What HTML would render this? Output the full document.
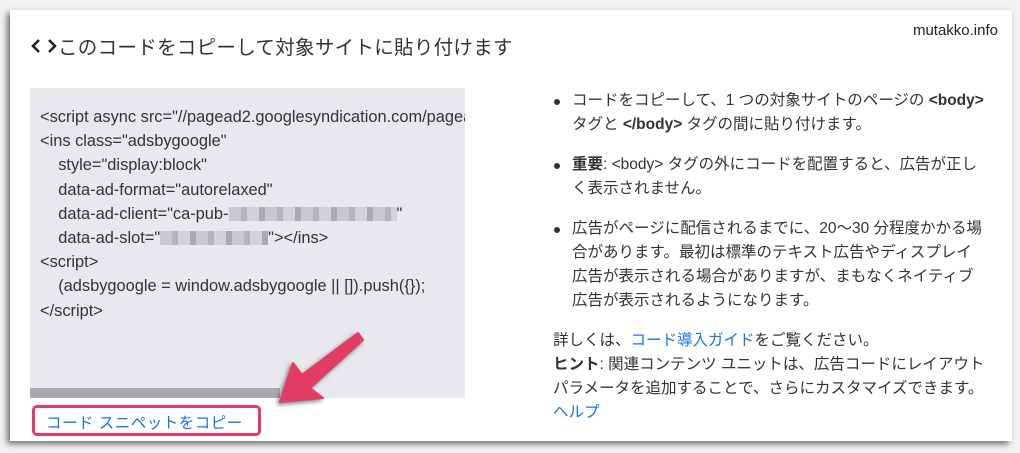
<!DOCTYPE html>
<html><head><meta charset="utf-8"><style>
*{margin:0;padding:0;box-sizing:border-box}
body{width:1020px;height:453px;background:#f3f3f3;font-family:"Liberation Sans","Noto Sans CJK JP",sans-serif;color:#333;position:relative;overflow:hidden}
.card{position:absolute;left:10px;top:10px;width:1002px;height:431px;background:#fff;box-shadow:-3px 3px 6px rgba(0,0,0,.55)}
.title{position:absolute;left:58px;top:31px;font-size:19.5px;color:#333;letter-spacing:.3px}
.site{position:absolute;right:22px;top:22px;font-size:15px;color:#222}
.code{position:absolute;left:30px;top:88px;width:435px;height:310px;background:#e8e9ec;overflow:hidden;font-size:16.4px;color:#333;line-height:24.2px;padding:17px 0 0 10px;white-space:pre}
.bar{position:absolute;left:30px;top:388px;width:250px;height:10px;background:#a9aaad}
.blur{display:inline-block;height:14px;vertical-align:-2px;background:repeating-linear-gradient(90deg,#c8c9cc 0 12px,#b4b5b8 12px 18px,#d2d3d6 18px 30px,#a9aaad 30px 36px)}
.btn{position:absolute;left:32px;top:405px;width:229px;height:31px;border:3px solid #e23c64;border-radius:5px;color:#1a73e8;font-size:15.5px;padding:3px 0 0 11px;letter-spacing:.5px;white-space:nowrap}
.right{position:absolute;left:553px;top:89px;width:460px;font-size:15.5px;line-height:24px;color:#333;white-space:nowrap}
.right li{list-style:none;position:relative;padding-left:19px;margin-bottom:16px}
.right li:before{content:"";position:absolute;left:1px;top:10px;width:6px;height:6px;border-radius:50%;background:#333}
a{color:#1a73e8;text-decoration:none}
</style></head><body>
<div class="card"></div>
<svg style="position:absolute;left:31px;top:38px" width="26" height="16"><path d="M8 2 L2 8 L8 14 M18 2 L24 8 L18 14" fill="none" stroke="#222" stroke-width="2.6"/></svg>
<div class="title">このコードをコピーして対象サイトに貼り付けます</div>
<div class="site">mutakko.info</div>
<div class="code">&lt;script async src="//pagead2.googlesyndication.com/pagead/js
&lt;ins class="adsbygoogle"
    style="display:block"
    data-ad-format="autorelaxed"
    data-ad-client="ca-pub-<span class="blur" style="width:168px"></span>"
    data-ad-slot="<span class="blur" style="width:108px"></span>"&gt;&lt;/ins&gt;
&lt;script&gt;
    (adsbygoogle = window.adsbygoogle || []).push({});
&lt;/script&gt;</div>
<div class="bar"></div>
<svg style="position:absolute;left:265px;top:325px" width="105" height="85"><path d="M93 8 L37 50 L28 38 L15 77 L58 73 L45 63 L98 15 Z" fill="#e23c64" stroke="#e23c64" stroke-width="2" stroke-linejoin="round" style="filter:drop-shadow(-2px 2px 2px rgba(0,0,0,.5))"/></svg>
<div class="btn">コード スニペットをコピー</div>
<div class="right"><ul>
<li>コードをコピーして、1 つの対象サイトのページの <b>&lt;body&gt;</b><br>タグと <b>&lt;/body&gt;</b> タグの間に貼り付けます。</li>
<li><b>重要</b>: &lt;body&gt; タグの外にコードを配置すると、広告が正し<br>く表示されません。</li>
<li>広告がページに配信されるまでに、20〜30 分程度かかる場<br>合があります。最初は標準のテキスト広告やディスプレイ<br>広告が表示される場合がありますが、まもなくネイティブ<br>広告が表示されるようになります。</li>
</ul>
<div>詳しくは、<a>コード導入ガイド</a>をご覧ください。</div>
<div><b>ヒント</b>: 関連コンテンツ ユニットは、広告コードにレイアウト<br>パラメータを追加することで、さらにカスタマイズできます。<br><a>ヘルプ</a></div>
</div>
</body></html>
